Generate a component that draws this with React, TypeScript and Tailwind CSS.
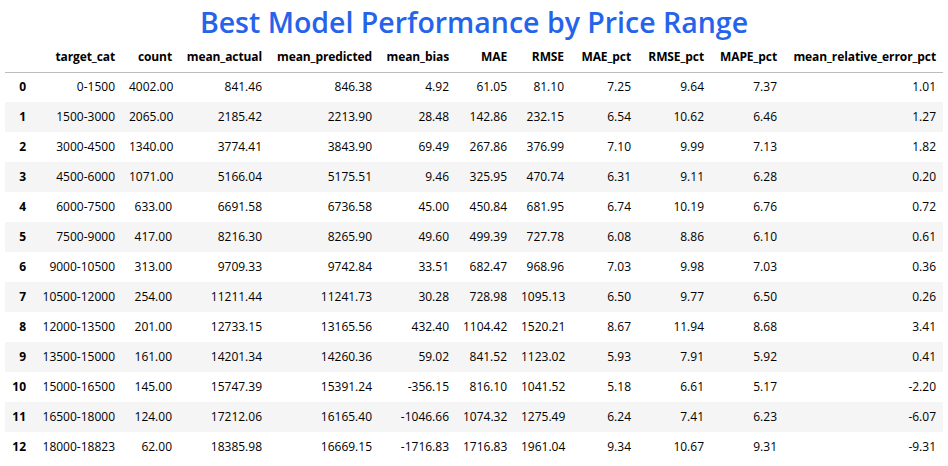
const columns = [
  { key: 'idx', label: '', w: 'w-[28px]' },
  { key: 'target_cat', label: 'target_cat', w: 'w-[89px]' },
  { key: 'count', label: 'count', w: 'w-[57px]' },
  { key: 'mean_actual', label: 'mean_actual', w: 'w-[90px]' },
  { key: 'mean_predicted', label: 'mean_predicted', w: 'w-[110px]' },
  { key: 'mean_bias', label: 'mean_bias', w: 'w-[77px]' },
  { key: 'MAE', label: 'MAE', w: 'w-[58px]' },
  { key: 'RMSE', label: 'RMSE', w: 'w-[57px]' },
  { key: 'MAE_pct', label: 'MAE_pct', w: 'w-[67px]' },
  { key: 'RMSE_pct', label: 'RMSE_pct', w: 'w-[73px]' },
  { key: 'MAPE_pct', label: 'MAPE_pct', w: 'w-[73px]' },
  { key: 'mean_relative_error_pct', label: 'mean_relative_error_pct', w: 'w-[159px]' },
];

const rows: string[][] = [
  ['0-1500', '4002.00', '841.46', '846.38', '4.92', '61.05', '81.10', '7.25', '9.64', '7.37', '1.01'],
  ['1500-3000', '2065.00', '2185.42', '2213.90', '28.48', '142.86', '232.15', '6.54', '10.62', '6.46', '1.27'],
  ['3000-4500', '1340.00', '3774.41', '3843.90', '69.49', '267.86', '376.99', '7.10', '9.99', '7.13', '1.82'],
  ['4500-6000', '1071.00', '5166.04', '5175.51', '9.46', '325.95', '470.74', '6.31', '9.11', '6.28', '0.20'],
  ['6000-7500', '633.00', '6691.58', '6736.58', '45.00', '450.84', '681.95', '6.74', '10.19', '6.76', '0.72'],
  ['7500-9000', '417.00', '8216.30', '8265.90', '49.60', '499.39', '727.78', '6.08', '8.86', '6.10', '0.61'],
  ['9000-10500', '313.00', '9709.33', '9742.84', '33.51', '682.47', '968.96', '7.03', '9.98', '7.03', '0.36'],
  ['10500-12000', '254.00', '11211.44', '11241.73', '30.28', '728.98', '1095.13', '6.50', '9.77', '6.50', '0.26'],
  ['12000-13500', '201.00', '12733.15', '13165.56', '432.40', '1104.42', '1520.21', '8.67', '11.94', '8.68', '3.41'],
  ['13500-15000', '161.00', '14201.34', '14260.36', '59.02', '841.52', '1123.02', '5.93', '7.91', '5.92', '0.41'],
  ['15000-16500', '145.00', '15747.39', '15391.24', '-356.15', '816.10', '1041.52', '5.18', '6.61', '5.17', '-2.20'],
  ['16500-18000', '124.00', '17212.06', '16165.40', '-1046.66', '1074.32', '1275.49', '6.24', '7.41', '6.23', '-6.07'],
  ['18000-18823', '62.00', '18385.98', '16669.15', '-1716.83', '1716.83', '1961.04', '9.34', '10.67', '9.31', '-9.31'],
];

export default function App() {
  return (
    <div className="w-[948px] h-[466px] bg-white overflow-hidden font-['Open_Sans',sans-serif] text-black">
      <div className="h-[42px] flex items-start justify-center pt-[3px]">
        <h1 className="text-[28.5px] leading-[38px] text-[#2563eb] font-semibold">
          Best Model Performance by Price Range
        </h1>
      </div>
      <table className="ml-[5px] w-[938px] table-fixed border-collapse text-[12px]">
        <colgroup>
          {columns.map(c => (
            <col key={c.key} className={c.w} />
          ))}
        </colgroup>
        <thead>
          <tr className="h-[30px] border-b border-[#bdbdbd]">
            {columns.map(c => (
              <th key={c.key} className="px-[7px] text-right font-bold tracking-[-0.1px] whitespace-nowrap">
                {c.label}
              </th>
            ))}
          </tr>
        </thead>
        <tbody>
          {rows.map((r, i) => (
            <tr key={i} className={i % 2 === 1 ? 'h-[30px] bg-[#f5f5f5]' : 'h-[30px]'}>
              <th className="px-[7px] text-right font-bold">{i}</th>
              {r.map((v, j) => (
                <td key={j} className="px-[7px] text-right whitespace-nowrap">
                  {v}
                </td>
              ))}
            </tr>
          ))}
        </tbody>
      </table>
    </div>
  );
}
